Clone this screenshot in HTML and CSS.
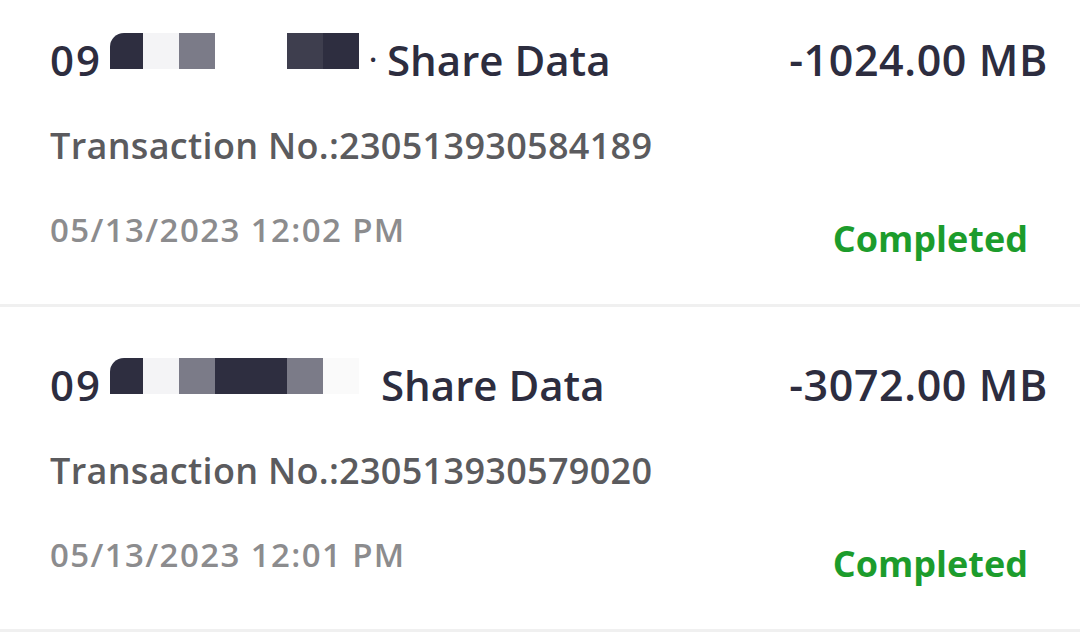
FILE: index.html
```html
<!DOCTYPE html>
<html>
<head>
<meta charset="utf-8">
<link rel="stylesheet" href="styles.css">
</head>
<body>
<div class="list">
  <div class="row">
    <div class="left">
      <div class="title"><span class="num">09</span><span class="mask"><span class="px c-dark"></span><span class="px c-light"></span><span class="px c-gray"></span><span class="px c-none"></span><span class="px c-none"></span><span class="px c-dark2"></span><span class="px c-dark"></span></span><span class="dot">·</span><span class="label">Share Data</span></div>
      <div class="txn">Transaction No.:230513930584189</div>
      <div class="date">05/13/2023 12:02 PM</div>
    </div>
    <div class="right">
      <div class="amount">-1024.00 MB</div>
      <div class="status">Completed</div>
    </div>
  </div>
  <div class="row">
    <div class="left">
      <div class="title"><span class="num">09</span><span class="mask"><span class="px c-dark"></span><span class="px c-light"></span><span class="px c-gray"></span><span class="px c-dark"></span><span class="px c-dark"></span><span class="px c-gray"></span><span class="px c-faint"></span></span><span class="gap"></span><span class="label">Share Data</span></div>
      <div class="txn">Transaction No.:230513930579020</div>
      <div class="date">05/13/2023 12:01 PM</div>
    </div>
    <div class="right">
      <div class="amount">-3072.00 MB</div>
      <div class="status">Completed</div>
    </div>
  </div>
</div>
</body>
</html>
```
FILE: styles.css
```css
html, body {
  margin: 0;
  padding: 0;
  background: #ffffff;
}
body {
  font-family: "Open Sans", "Noto Sans", sans-serif;
  width: 1080px;
  height: 642px;
  overflow: hidden;
}
.list {
  margin-top: -18px;
}
.row {
  display: flex;
  justify-content: space-between;
  height: 322px;
  padding: 0 32px 0 50px;
  border-bottom: 3px solid #f0f0f0;
  box-sizing: content-box;
}
.left {
  display: flex;
  flex-direction: column;
}
.title {
  display: flex;
  align-items: center;
  margin-top: 56px;
  height: 44px;
  font-size: 42px;
  font-weight: 600;
  color: #2d2d3f;
  line-height: 44px;
}
.num {
  letter-spacing: 2px;
}
.mask {
  display: flex;
  align-self: flex-start;
  height: 36px;
  margin-top: -5px;
  margin-left: 8px;
}
.px {
  width: 36px;
  height: 36px;
}
.px:first-child {
  width: 33px;
  border-radius: 14px 0 0 0;
}
.c-dark { background: #2e2e40; }
.c-dark2 { background: #3e3e4e; }
.c-light { background: #f4f4f6; }
.c-gray { background: #7b7b88; }
.c-none { background: transparent; }
.c-faint { background: #fafafa; }
.dot {
  width: 28px;
  text-align: center;
  font-size: 30px;
}
.gap {
  width: 22px;
}
.txn {
  margin-top: 44px;
  font-size: 36px;
  line-height: 40px;
  font-weight: 600;
  letter-spacing: 0.3px;
  color: #5b5b5e;
}
.date {
  margin-top: 44px;
  font-size: 33px;
  line-height: 40px;
  font-weight: 600;
  letter-spacing: 1.4px;
  color: #8c8c8e;
}
.right {
  display: flex;
  flex-direction: column;
  align-items: flex-end;
}
.amount {
  margin-top: 56px;
  height: 44px;
  line-height: 44px;
  font-size: 43px;
  font-weight: 600;
  letter-spacing: 0.6px;
  color: #2d2d3f;
}
.status {
  margin-top: 137px;
  margin-right: 20px;
  font-size: 36px;
  line-height: 40px;
  font-weight: 700;
  color: #1c9c2c;
}
```
